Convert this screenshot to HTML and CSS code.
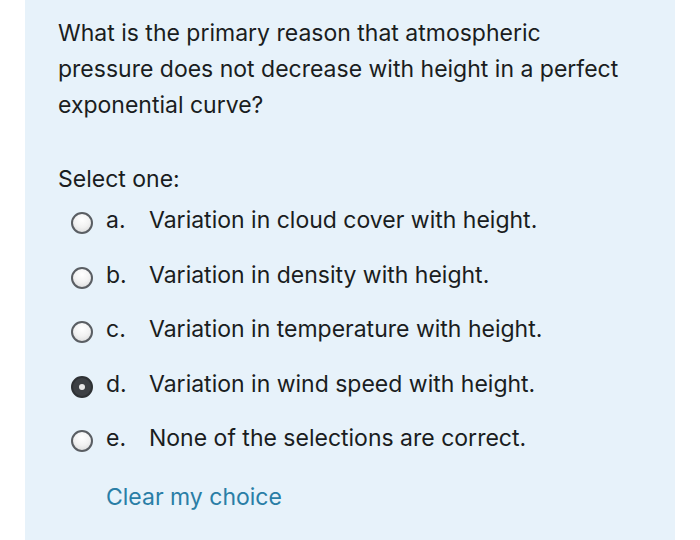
FILE: index.html
```html
<!DOCTYPE html>
<html>
<head>
<meta charset="utf-8">
<link rel="stylesheet" href="styles.css">
</head>
<body>
<div class="panel">
  <div class="qtext">What is the primary reason that atmospheric pressure does not decrease with height in a perfect exponential curve?</div>
  <div class="prompt">Select one:</div>
  <div class="answers">
    <div class="opt"><span class="radio"></span><span class="letter">a.</span><span class="label">Variation in cloud cover with height.</span></div>
    <div class="opt"><span class="radio"></span><span class="letter">b.</span><span class="label">Variation in density with height.</span></div>
    <div class="opt"><span class="radio"></span><span class="letter">c.</span><span class="label">Variation in temperature with height.</span></div>
    <div class="opt"><span class="radio checked"></span><span class="letter">d.</span><span class="label">Variation in wind speed with height.</span></div>
    <div class="opt"><span class="radio"></span><span class="letter">e.</span><span class="label">None of the selections are correct.</span></div>
  </div>
  <div class="clear">Clear my choice</div>
</div>
</body>
</html>
```
FILE: styles.css
```css
html, body {
  margin: 0;
  padding: 0;
  background: #ffffff;
  width: 700px;
  height: 540px;
  overflow: hidden;
}
body {
  font-family: Inter, "Liberation Sans", Arial, sans-serif;
  color: #1a1d21;
}
.panel {
  margin-left: 25px;
  width: 650px;
  height: 540px;
  background: #e7f2fa;
  box-sizing: border-box;
  padding: 15px 20px 0 33px;
}
.qtext {
  font-size: 23px;
  line-height: 36px;
  max-width: 575px;
}
.prompt {
  font-size: 23px;
  line-height: 36px;
  margin-top: 38px;
}
.answers {
  margin-top: -4px;
  padding-left: 13px;
}
.opt {
  display: flex;
  align-items: center;
  height: 54.5px;
  font-size: 23px;
}
.radio {
  width: 18px;
  height: 18px;
  border-radius: 50%;
  border: 2px solid #5a5e63;
  background: radial-gradient(circle at 50% 30%, #ffffff 0%, #f2f2f2 50%, #d6d6d6 100%);
  flex: none;
  margin-top: 6px;
  position: relative;
}
.radio.checked {
  background: #3d4044;
  border-color: #2e3134;
}
.radio.checked::after {
  content: "";
  position: absolute;
  left: 6px;
  top: 6px;
  width: 6px;
  height: 6px;
  border-radius: 50%;
  background: #e8e8e8;
}
.letter {
  margin-left: 13px;
  width: 43px;
}
.clear {
  font-size: 23px;
  line-height: 36px;
  color: #2a7ea6;
  margin-top: 13px;
  padding-left: 48px;
}
```
